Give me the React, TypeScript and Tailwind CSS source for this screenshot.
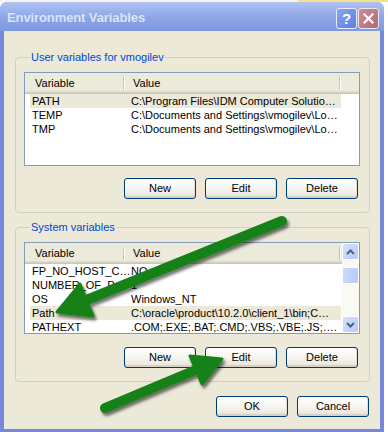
import React from "react"

type Row = { name: string; value: string; selected?: boolean }

const userRows: Row[] = [
  { name: "PATH", value: "C:\\Program Files\\IDM Computer Solutio…", selected: true },
  { name: "TEMP", value: "C:\\Documents and Settings\\vmogilev\\Lo…" },
  { name: "TMP", value: "C:\\Documents and Settings\\vmogilev\\Lo…" },
]

const systemRows: Row[] = [
  { name: "FP_NO_HOST_C…", value: "NO" },
  { name: "NUMBER_OF_P…", value: "1" },
  { name: "OS", value: "Windows_NT" },
  { name: "Path", value: "C:\\oracle\\product\\10.2.0\\client_1\\bin;C…", selected: true },
  { name: "PATHEXT", value: ".COM;.EXE;.BAT;.CMD;.VBS;.VBE;.JS;…." },
]

function XpButton({ label }: { label: string }) {
  return (
    <button className="w-[72px] h-[21px] rounded-[3px] border border-[#003C74] bg-gradient-to-b from-white via-[#F6F5F0] to-[#E6E3D8] shadow-[inset_0_-2px_0_#D8D2C6,inset_-1px_0_0_#E3DFD3] text-[11px] leading-none text-black">
      {label}
    </button>
  )
}

function HeaderSep() {
  return (
    <div className="w-[2px] h-[21px] flex py-[4px] shrink-0">
      <div className="w-[1px] bg-[#C7C5B2]" />
      <div className="w-[1px] bg-white" />
    </div>
  )
}

function ScrollArrow({ up }: { up?: boolean }) {
  return (
    <div className="w-[17px] h-[17px] rounded-[2px] border border-white bg-gradient-to-br from-[#D6E2FE] to-[#B7CBF8] flex items-center justify-center">
      <svg width="9" height="6" viewBox="0 0 9 6">
        <path
          d={up ? "M1 5 L4.5 1.5 L8 5" : "M1 1 L4.5 4.5 L8 1"}
          fill="none"
          stroke="#4D6185"
          strokeWidth="2"
        />
      </svg>
    </div>
  )
}

function ListView({ rows, height, scroll }: { rows: Row[]; height: string; scroll?: boolean }) {
  return (
    <div className={`w-[336px] ${height} border border-[#7F9DB9] bg-white flex overflow-hidden`}>
      <div className="flex-1 flex flex-col overflow-hidden">
        {/* header */}
        <div className="h-[21px] shrink-0 flex bg-[#EBEADB] shadow-[inset_0_-1px_0_#CBC7B8,inset_0_-2px_0_#D6D2C2,inset_0_-3px_0_#E2DECD]">
          <div className="w-[98px] pl-[10px] leading-[21px] pb-[1px]">Variable</div>
          <HeaderSep />
          <div className="w-[214px] pl-[8px] leading-[21px] pb-[1px]">Value</div>
          <HeaderSep />
          <div className="flex-1" />
        </div>
        {/* rows */}
        <div className="flex flex-col pl-[5px]">
          {rows.map((r) => (
            <div
              key={r.name}
              className={`w-[311px] h-[14px] flex leading-[14px] whitespace-nowrap ${r.selected ? "bg-[#ECE9D8]" : ""}`}
            >
              <div className="w-[99px] pl-[2px] overflow-hidden">{r.name}</div>
              <div className="flex-1 pl-[2px] overflow-hidden">{r.value}</div>
            </div>
          ))}
        </div>
      </div>
      {scroll && (
        <div className="w-[17px] shrink-0 bg-[#FAF9F4] flex flex-col justify-between">
          <div className="flex flex-col">
            <ScrollArrow up />
            <div className="mt-[7px] w-[17px] h-[17px] rounded-[2px] border border-white bg-gradient-to-r from-[#C9D8FC] to-[#B9CCF8]" />
          </div>
          <ScrollArrow />
        </div>
      )}
    </div>
  )
}

function GroupBox({ title, children, className }: { title: string; children: React.ReactNode; className?: string }) {
  return (
    <fieldset className={`ml-[11px] mr-[10px] border border-[#D0D0BF] rounded-[4px] pl-[8px] pr-[9px] pb-[13px] ${className ?? ""}`}>
      <legend className="ml-[6px] px-[1px] text-[#0046D5] leading-[13px]">{title}</legend>
      {children}
    </fieldset>
  )
}

export default function App() {
  return (
    <div className="relative w-[388px] h-[432px] bg-white overflow-hidden font-['Liberation_Sans',sans-serif] text-[11px] text-black">
      {/* sliver of the desktop above the window */}
      <div className="h-[2px] flex">
        <div className="w-[298px] bg-[#F4F4F2]" />
        <div className="flex-1 bg-[#F7E08A]" />
      </div>
      <div className="w-[384px] h-[430px] rounded-t-[7px] bg-[#7888DE] flex flex-col">
        {/* title bar */}
        <div className="h-[29px] shrink-0 rounded-t-[7px] bg-gradient-to-b from-[#B1C3F2] via-[#8FA7E8] to-[#7E98E0] flex items-center pt-[3px] pl-[7px] pr-[5px]">
          <span className="flex-1 text-[13px] font-bold text-[#D8E4F8] tracking-[-0.1px]">Environment Variables</span>
          <div className="flex gap-[1px]">
            <div className="w-[21px] h-[21px] rounded-[3px] border border-[#E6EEFD] bg-gradient-to-br from-[#8AA6F0] to-[#5C7EE0] flex items-center justify-center text-white font-bold text-[15px] leading-none">
              ?
            </div>
            <div className="w-[21px] h-[21px] rounded-[3px] border border-[#F0E4EC] bg-gradient-to-br from-[#CC8C98] to-[#B06A78] flex items-center justify-center">
              <svg width="11" height="11" viewBox="0 0 11 11">
                <path d="M1.5 1.5 L9.5 9.5 M9.5 1.5 L1.5 9.5" stroke="white" strokeWidth="2.2" strokeLinecap="square" />
              </svg>
            </div>
          </div>
        </div>
        {/* client area */}
        <div className="flex-1 mx-[4px] mb-[3px] bg-[#ECE9D8] pt-[20px] flex flex-col">
          <GroupBox title="User variables for vmogilev">
            <div className="mt-[8px]">
              <ListView rows={userRows} height="h-[94px]" />
            </div>
            <div className="mt-[12px] flex justify-end gap-[9px] mr-[2px]">
              <XpButton label="New" />
              <XpButton label="Edit" />
              <XpButton label="Delete" />
            </div>
          </GroupBox>
          <GroupBox title="System variables" className="mt-[8px]">
            <div className="mt-[8px]">
              <ListView rows={systemRows} height="h-[92px]" scroll />
            </div>
            <div className="mt-[13px] flex justify-end gap-[9px] mr-[2px]">
              <XpButton label="New" />
              <XpButton label="Edit" />
              <XpButton label="Delete" />
            </div>
          </GroupBox>
          <div className="mt-[14px] mr-[11px] flex justify-end gap-[9px]">
            <XpButton label="OK" />
            <XpButton label="Cancel" />
          </div>
        </div>
      </div>

      {/* green annotation arrows */}
      <svg width="388" height="432" className="absolute left-0 top-0 pointer-events-none">
        <defs>
          <filter id="arrowShadow" x="-20%" y="-20%" width="140%" height="140%">
            <feDropShadow dx="2" dy="3" stdDeviation="1.6" floodColor="#000" floodOpacity="0.55" />
          </filter>
        </defs>
        <g filter="url(#arrowShadow)" fill="#178117" stroke="#178117" strokeLinejoin="round">
          <line x1="282" y1="221" x2="84" y2="301" strokeWidth="10" strokeLinecap="round" />
          <polygon points="57,312 93,316 80,284" strokeWidth="3" />
          <line x1="105" y1="408" x2="198" y2="369" strokeWidth="10" strokeLinecap="round" />
          <polygon points="222,359 202,384 190,356" strokeWidth="3" />
        </g>
      </svg>
    </div>
  )
}
